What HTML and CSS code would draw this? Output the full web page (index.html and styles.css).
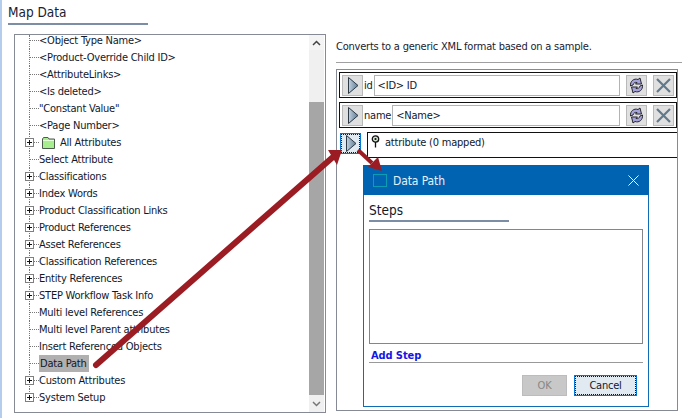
FILE: index.html
```html
<!DOCTYPE html>
<html lang="en">
<head>
<meta charset="utf-8">
<title>Map Data</title>
<link rel="stylesheet" href="styles.css">
</head>
<body>
<svg width="0" height="0" class="defs">
  <defs>
    <linearGradient id="tri" x1="0" x2="1" y1="0" y2="0">
      <stop offset="0" stop-color="#c4d2e0"/><stop offset="1" stop-color="#5e7b96"/>
    </linearGradient>
    <symbol id="play" viewBox="0 0 21 21">
      <path d="M6.500 2.500V18.500L16 10.500Z" fill="url(#tri)" stroke="#2d3a46" stroke-width="1"/>
    </symbol>
    <symbol id="sync" viewBox="0 0 21 21">
      <path d="M4.500 11C4 6 8 3 12 4.500L14 3L15.500 9L9.500 9L11 7.500C9 7 7.500 8 7 10Z" fill="#a6a3dc" stroke="#26262e"/>
      <path d="M16.500 10C17 15 13 18 9 16.500L7 18L5.500 12L11.500 12L10 13.500C12 14 13.500 13 14 11Z" fill="#a6a3dc" stroke="#26262e"/>
    </symbol>
    <symbol id="cross" viewBox="0 0 21 21">
      <path d="M4 4L17 17M17 4L4 17" stroke="#62798c" stroke-width="2.200" fill="none"/>
    </symbol>
  </defs>
</svg>
<div class="page">
  <section class="left">
    <h1 class="title">Map Data</h1>
    <div class="tree-box">
      <div class="tree">
        <div class="row"><i class="dash"></i><span>&lt;Object Type Name&gt;</span></div>
        <div class="row"><i class="dash"></i><span>&lt;Product-Override Child ID&gt;</span></div>
        <div class="row"><i class="dash"></i><span>&lt;AttributeLinks&gt;</span></div>
        <div class="row"><i class="dash"></i><span>&lt;Is deleted&gt;</span></div>
        <div class="row"><i class="dash"></i><span>"Constant Value"</span></div>
        <div class="row"><i class="dash"></i><span>&lt;Page Number&gt;</span></div>
        <div class="row"><b class="plus"></b><i class="dash"></i>
          <svg class="folder" width="15" height="12" viewBox="0 0 15 12"><path d="M1.500 11.500V2L2.500 .5H7L8 2H13.500V11.500Z" fill="#a6ee8e" stroke="#4c5a4c"/><path d="M2 3.500H13" stroke="#e4ffd8"/></svg>
          <span>All Attributes</span></div>
        <div class="row"><i class="dash"></i><span>Select Attribute</span></div>
        <div class="row"><b class="plus"></b><i class="dash"></i><span>Classifications</span></div>
        <div class="row"><b class="plus"></b><i class="dash"></i><span>Index Words</span></div>
        <div class="row"><b class="plus"></b><i class="dash"></i><span>Product Classification Links</span></div>
        <div class="row"><b class="plus"></b><i class="dash"></i><span>Product References</span></div>
        <div class="row"><b class="plus"></b><i class="dash"></i><span>Asset References</span></div>
        <div class="row"><b class="plus"></b><i class="dash"></i><span>Classification References</span></div>
        <div class="row"><b class="plus"></b><i class="dash"></i><span>Entity References</span></div>
        <div class="row"><b class="plus"></b><i class="dash"></i><span>STEP Workflow Task Info</span></div>
        <div class="row"><i class="dash"></i><span>Multi level References</span></div>
        <div class="row"><i class="dash"></i><span>Multi level Parent attributes</span></div>
        <div class="row"><i class="dash"></i><span>Insert Referenced Objects</span></div>
        <div class="row"><i class="dash"></i><span class="selected">Data Path</span></div>
        <div class="row"><b class="plus"></b><i class="dash"></i><span>Custom Attributes</span></div>
        <div class="row"><b class="plus"></b><i class="dash"></i><span>System Setup</span></div>
      </div>
      <div class="scrollbar">
        <div class="sb-btn"><svg width="9" height="6" viewBox="0 0 9 6"><path d="M1 5L4.500 1.500L8 5" fill="none" stroke="#444" stroke-width="1.500"/></svg></div>
        <div class="sb-track"></div>
        <div class="sb-thumb"></div>
        <div class="sb-btn sb-btn-end"><svg width="9" height="6" viewBox="0 0 9 6"><path d="M1 1L4.500 4.500L8 1" fill="none" stroke="#777" stroke-width="1.500"/></svg></div>
      </div>
    </div>
  </section>
  <section class="right">
    <p class="desc">Converts to a generic XML format based on a sample.</p>
    <div class="panel">
      <div class="map-row">
        <button class="tool"><svg width="21" height="21"><use href="#play"/></svg></button>
        <span class="map-label">id</span>
        <span class="field">&lt;ID&gt; ID</span>
        <button class="tool tool-sync"><svg width="21" height="21"><use href="#sync"/></svg></button>
        <button class="tool tool-x"><svg width="21" height="21"><use href="#cross"/></svg></button>
      </div>
      <div class="map-row">
        <button class="tool"><svg width="21" height="21"><use href="#play"/></svg></button>
        <span class="map-label">name</span>
        <span class="field">&lt;Name&gt;</span>
        <button class="tool tool-sync"><svg width="21" height="21"><use href="#sync"/></svg></button>
        <button class="tool tool-x"><svg width="21" height="21"><use href="#cross"/></svg></button>
      </div>
      <div class="attr-row">
        <button class="tool tool-focus"><svg width="21" height="21"><use href="#play"/></svg></button>
        <div class="attr-box">
          <svg class="pin" width="9" height="13" viewBox="0 0 9 13"><circle cx="4.500" cy="4" r="3.200" fill="#cfe0cf" stroke="#111" stroke-width="1.300"/><circle cx="4.500" cy="4" r="1.100" fill="#111"/><path d="M4.500 7V12.500" stroke="#111" stroke-width="1.300"/></svg>
          <span>attribute (0 mapped)</span>
        </div>
      </div>
    </div>
  </section>
</div>
<div class="dialog">
  <header class="dlg-bar">
    <i class="dlg-icon"></i>
    <span class="dlg-title">Data Path</span>
    <svg class="dlg-close" width="11" height="11" viewBox="0 0 11 11"><path d="M.5 .5L10.500 10.500M10.500 .5L.5 10.500" stroke="#fff" stroke-width="1"/></svg>
  </header>
  <div class="dlg-body">
    <h2 class="steps">Steps</h2>
    <div class="steps-list"></div>
    <a class="add-step">Add Step</a>
    <div class="dlg-actions">
      <button class="btn btn-off">OK</button>
      <button class="btn btn-focus"><span>Cancel</span></button>
    </div>
  </div>
</div>
<svg class="arrows" width="682" height="418" viewBox="0 0 682 418">
  <path d="M96 365L333 157" stroke="#9b1c23" stroke-width="6" stroke-linecap="round" fill="none"/>
  <path d="M342 150L328 150L337 165Z" fill="#9b1c23"/>
  <path d="M358 150L372 163" stroke="#9b1c23" stroke-width="4" fill="none"/>
  <path d="M382 171L368 167L378 157Z" fill="#9b1c23"/>
</svg>
</body>
</html>
```

FILE: styles.css
```css
* { box-sizing: border-box; }
html, body { margin: 0; padding: 0; }
body {
  width: 682px;
  height: 418px;
  overflow: hidden;
  background: #fff;
  color: #10182c;
  font-family: "DejaVu Sans", "Liberation Sans", sans-serif;
  font-stretch: condensed;
  font-size: 11px;
  letter-spacing: -.22px;
  position: relative;
  border-left: 2px solid #b4cdec;
}
.defs { position: absolute; }
.page { display: flex; height: 418px; }

.left { width: 334px; padding-left: 6px; flex: none; }
.title {
  margin: 0;
  width: 140px;
  height: 25px;
  padding-top: 2px;
  font-size: 13.500px;
  font-weight: 400;
  letter-spacing: 0;
  line-height: 20px;
  color: #1a2230;
  border-bottom: 2px solid #7b8ea5;
}
.tree-box {
  display: flex;
  margin: 9px 0 0 6px;
  width: 312px;
  height: 379px;
  border: 1px solid #868a94;
}
.tree { flex: 1; padding-left: 14px; overflow: hidden; min-width: 0; }
.row {
  position: relative;
  display: flex;
  align-items: center;
  height: 17px;
  border-left: 1px dotted #777;
  white-space: nowrap;
}
.row:first-child { height: 14px; align-items: flex-start; }
.row:first-child .dash { margin-top: 5px; }
.row:last-child { height: 9px; align-items: flex-start; }
.row:last-child .dash { margin-top: 8px; }
.dash { flex: none; width: 9px; height: 0; border-top: 1px dotted #777; }
.plus {
  position: absolute;
  left: -5px;
  top: 4px;
  width: 9px;
  height: 9px;
  background:
    linear-gradient(#111, #111) center / 5px 1px no-repeat,
    linear-gradient(#111, #111) center / 1px 5px no-repeat,
    #fff;
  border: 1px solid #7f7f7f;
}
.row span { line-height: 17px; }
.row:first-child span { line-height: 11px; }
.folder { flex: none; margin: 0 4px 0 2px; }
.selected { background: #b0b0b0; padding: 0 3px 0 1px; }

.scrollbar { width: 16px; flex: none; display: flex; flex-direction: column; padding-right: 1px; }
.sb-btn { height: 15px; display: flex; align-items: center; justify-content: center; background: #f4f4f4; }
.sb-btn-end { height: 17px; background: #f0f0f0; }
.sb-track { height: 52px; background: #f0f0f0; }
.sb-thumb { flex: 1; background: #a6a6a6; }

.right { flex: 1; padding-top: 39px; min-width: 0; }
.desc {
  margin: 0;
  height: 24px;
  padding-bottom: 7px;
  line-height: 16px;
  color: #1a2230;
  border-bottom: 1px solid #a0a0a0;
}
.panel {
  margin-top: 6px;
  width: 342px;
  height: 342px;
  border: 1px solid #868a94;
  padding: 2px 0 0 2px;
}
.map-row {
  display: flex;
  align-items: center;
  height: 26px;
  margin-bottom: 4px;
  padding: 0 2px;
  width: 338px;
  border: 1px solid #111;
}
.tool {
  flex: none;
  width: 21px;
  height: 21px;
  padding: 0;
  display: block;
  background: #e0e0e0;
  border: 1px solid #b9b9b9;
}
.tool svg { display: block; margin: -1px; }
.map-label { margin: 0 1px; line-height: 21px; }
.field {
  flex: 1;
  height: 21px;
  line-height: 19px;
  padding-left: 3px;
  border: 1px solid #b3b3b3;
  background: #fff;
}
.tool-sync { margin-left: 6px; }
.tool-x { margin-left: 6px; }
.attr-row { display: flex; align-items: flex-start; height: 27px; }
.tool-focus {
  margin: 1px 6px 0 1px;
  border: 1px solid #0078d7;
  background: #e1e9f1;
  outline: 1px dotted #111;
  outline-offset: -2px;
}
.attr-box {
  flex: 1;
  height: 26px;
  display: flex;
  align-items: flex-start;
  padding: 2px 0 0 3px;
  border: 1px solid #111;
  border-right: 0;
  line-height: 15px;
}
.pin { margin: 0 5px 0 0; flex: none; }

.dialog {
  position: absolute;
  left: 361px;
  top: 165px;
  width: 286px;
  height: 242px;
  display: flex;
  flex-direction: column;
  background: #fff;
  border: 1px solid #0f6cb5;
  border-top: 0;
}
.dlg-bar {
  flex: none;
  display: flex;
  align-items: center;
  height: 30px;
  margin: 0 -1px;
  padding: 0 10px;
  background: #0063b1;
  color: #e6f0f8;
}
.dlg-icon { width: 14px; height: 13px; border: 1px solid #0a9db4; flex: none; }
.dlg-title { margin-left: 6px; padding-top: 2px; font-size: 12px; letter-spacing: -.1px; flex: 1; }
.dlg-close { flex: none; }
.dlg-body { flex: 1; padding: 5px 5px 0; display: flex; flex-direction: column; }
.steps {
  margin: 0;
  width: 140px;
  height: 22px;
  font-size: 13.500px;
  font-weight: 400;
  letter-spacing: 0;
  line-height: 20px;
  color: #10182c;
  border-bottom: 2px solid #7b8ea5;
}
.steps-list { margin-top: 7px; height: 115px; border: 1px solid #85858a; }
.add-step {
  height: 19px;
  padding: 4px 2px 0;
  line-height: 15px;
  font-weight: 700;
  font-size: 11px;
  letter-spacing: -.1px;
  color: #1515e6;
  border-bottom: 1px solid #999;
}
.dlg-actions { display: flex; justify-content: flex-end; gap: 7px; margin-top: 12px; padding-right: 6px; }
.btn { height: 21px; padding: 0; font: inherit; letter-spacing: inherit; }
.btn-off { width: 45px; background: #c8c8c8; border: 1px solid #bcbcbc; color: #868686; }
.btn-focus { width: 63px; background: #e1e9f1; border: 1px solid #0078d7; color: #10182c; outline: 1px dotted #111; outline-offset: -2px; }

.arrows { position: absolute; left: -2px; top: 0; pointer-events: none; }
```
